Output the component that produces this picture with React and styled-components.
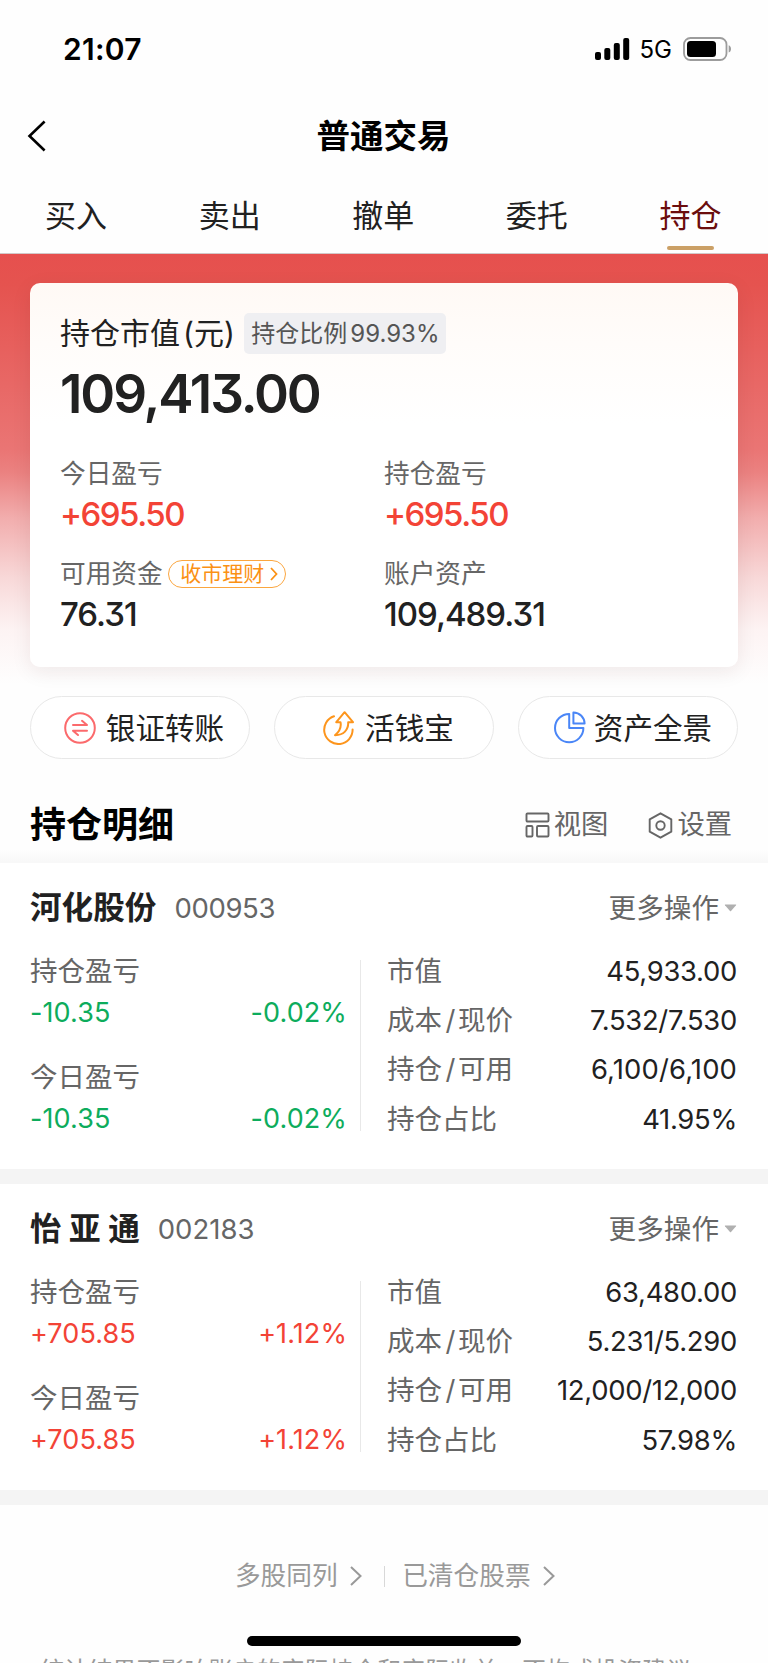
import React from 'react';
import styled, { createGlobalStyle } from 'styled-components';

const GlobalStyle = createGlobalStyle`
  * { box-sizing: border-box; }
  html, body { margin: 0; padding: 0; background: #fefefe; }
  body {
    font-family: Inter, "Noto Sans CJK SC", sans-serif;
    color: #212121;
    overflow: hidden;
  }
`;

const Screen = styled.div`
  position: relative;
  width: 768px;
  height: 1663px;
  overflow: hidden;
  background: #fefefe;
  white-space: nowrap;
`;

const StatusBar = styled.header`
  display: flex;
  justify-content: space-between;
  align-items: center;
  height: 98px;
  padding: 0 36px 0 63px;
  color: #000;
`;

const Clock = styled.span`
  font-size: 30px;
  font-weight: 600;
  line-height: 40px;
  letter-spacing: 0.3px;
`;

const StatusIcons = styled.div`
  display: flex;
  align-items: center;
`;

const Network = styled.span`
  font-size: 24px;
  line-height: 30px;
  margin: 2px 11px 0 10px;
`;

const NavBar = styled.div`
  display: grid;
  grid-template-columns: 60px 1fr 60px;
  align-items: center;
  height: 76px;
  padding: 0 1px 0 0;
`;

const BackButton = styled.button`
  border: 0;
  background: none;
  padding: 0 0 0 26px;
  display: flex;
`;

const Title = styled.h1`
  margin: 0;
  text-align: center;
  font-size: 33.5px;
  font-weight: 700;
  line-height: 44px;
  color: #000;
`;

const Tabs = styled.nav`
  display: grid;
  grid-template-columns: repeat(5, 1fr);
  height: 80px;
  border-bottom: 1px solid #d2c8c8;
`;

const Tab = styled.div`
  display: flex;
  flex-direction: column;
  align-items: center;
  padding: 20px 1.5px 0 0;
  font-size: 31px;
  line-height: 44px;
  color: ${(p) => (p.$active ? '#6b0d0d' : '#212121')};
  &::after {
    content: '';
    width: 47px;
    height: 4px;
    margin-top: 8px;
    border-radius: 2px;
    background: ${(p) => (p.$active ? '#cba066' : 'transparent')};
  }
`;

const Hero = styled.section`
  padding: 29px 30px 0;
  height: 442px;
  background: linear-gradient(
    to bottom,
    #e6504e 0,
    #e5534f 30px,
    #ea7574 195px,
    #eb8180 218px,
    #f2aeae 265px,
    #f8d9d9 325px,
    #fdf3f3 375px,
    #fefefe 430px
  );
`;

const AssetCard = styled.div`
  height: 384px;
  border-radius: 10px;
  padding: 29px 30px 0 30px;
  background: linear-gradient(to bottom, #fff9f5 0, #fffcfa 60px, #fff 140px);
  box-shadow: 0 5px 20px rgba(60, 20, 20, 0.08);
`;

const ValueHeading = styled.div`
  display: flex;
  align-items: center;
  height: 43px;
  font-size: 30px;
  line-height: 43px;
`;

const Paren = styled.span`
  margin-left: 3px;
`;

const RatioBadge = styled.span`
  display: flex;
  align-items: center;
  justify-content: center;
  gap: 3px;
  width: 202px;
  height: 41px;
  margin-left: 9.5px;
  border-radius: 5px;
  background: #efeff2;
  color: #555;
  font-size: 24px;
  line-height: 41px;
`;

const Total = styled.div`
  margin-top: 9px;
  height: 60px;
  font-size: 53px;
  font-weight: 600;
  line-height: 60px;
  letter-spacing: -2.1px;
  font-feature-settings: 'cv09';
`;

const Figures = styled.div`
  display: grid;
  grid-template-columns: 324px 1fr;
  margin-top: 30px;
  row-gap: 19px;
`;

const Figure = styled.div`
  display: flex;
  flex-direction: column;
  height: 81px;
`;

const FigureLabel = styled.div`
  display: flex;
  align-items: center;
  height: 40px;
  font-size: 25.7px;
  line-height: 40px;
  color: #666;
`;

const FigureValue = styled.div`
  height: 41px;
  font-size: 33px;
  font-weight: 500;
  line-height: 41px;
  letter-spacing: ${(p) => (p.$up ? '-1.5px' : '-1px')};
  color: ${(p) => (p.$up ? '#f34336' : '#212121')};
  font-feature-settings: 'cv09';
`;

const Chip = styled.span`
  display: flex;
  align-items: center;
  gap: 6px;
  width: 118px;
  height: 28px;
  margin-left: 5.5px;
  padding-left: 11px;
  border: 1.5px solid #fba63f;
  border-radius: 14px;
  color: #fb9114;
  font-size: 21px;
  line-height: 26px;
`;

const Shortcuts = styled.div`
  display: grid;
  grid-template-columns: repeat(3, 220px);
  gap: 24px;
  padding: 0 30px;
`;

const Shortcut = styled.button`
  display: flex;
  align-items: center;
  justify-content: center;
  gap: ${(p) => p.$gap}px;
  height: 63px;
  padding: 0 0 0 ${(p) => p.$inset}px;
  border: 1px solid #e8e8e8;
  border-radius: 32px;
  background: #fff;
  color: #212121;
  font-family: inherit;
  font-size: 29.6px;
  line-height: 40px;
`;

const SectionHead = styled.div`
  display: flex;
  align-items: center;
  height: 104px;
  padding: 28px 36px 0 30px;
  background: linear-gradient(to bottom, transparent 90px, #f8f8f8 103px);
`;

const SectionTitle = styled.h2`
  flex: 1;
  margin: 0;
  font-size: 36px;
  font-weight: 700;
  line-height: 50px;
  color: #000;
`;

const Tool = styled.span`
  display: flex;
  align-items: center;
  gap: 4px;
  margin-left: 40px;
  color: #666;
  font-size: 27.3px;
  line-height: 40px;
`;

const Holding = styled.article`
  height: 321px;
  padding: 23px 31px 0 30px;
  border-bottom: 15px solid #f4f4f4;
  background: #fff;
`;

const HoldingHead = styled.div`
  display: flex;
  align-items: center;
  height: 44px;
  margin-bottom: 19px;
`;

const StockName = styled.h3`
  margin: 0;
  font-size: 31.6px;
  font-weight: 700;
  line-height: 44px;
`;

const StockCode = styled.span`
  flex: 1;
  margin-left: 18px;
  font-size: 27.5px;
  line-height: 44px;
  letter-spacing: ${(p) => p.$spacing};
  color: #666;
`;

const More = styled.span`
  display: flex;
  align-items: center;
  gap: 5px;
  font-size: 27.6px;
  line-height: 44px;
  color: #666;
`;

const HoldingBody = styled.div`
  display: flex;
  align-items: flex-start;
`;

const ProfitColumn = styled.div`
  display: flex;
  flex-direction: column;
  gap: 24px;
  width: 331px;
  height: 171px;
  margin-top: 11px;
  padding-right: 13px;
  border-right: 1px solid #e8e8e8;
`;

const Profit = styled.div`
  margin-top: ${(p) => (p.$first ? '-9px' : '0')};
  height: 82px;
`;

const Label = styled.div`
  height: 41px;
  font-size: 27.5px;
  line-height: 41px;
  color: #666;
`;

const ProfitRow = styled.div`
  display: flex;
  justify-content: space-between;
  height: 41px;
  font-size: 27px;
  line-height: 41px;
  letter-spacing: 0.1px;
  color: ${(p) => (p.$up ? '#f34336' : '#0dac5c')};
`;

const DetailColumn = styled.div`
  flex: 1;
  padding-left: 26px;
`;

const DetailRow = styled.div`
  display: flex;
  justify-content: space-between;
  height: 49.2px;
  line-height: 45px;
  font-size: 27.5px;
  color: #666;
`;

const DetailValue = styled.span`
  font-size: 27.4px;
  letter-spacing: ${(p) => p.$spacing || '-0.28px'};
  color: #212121;
`;

const Slash = styled.span`
  margin: 0 2.5px 0 3.5px;
`;

const Footer = styled.footer`
  display: flex;
  justify-content: center;
  align-items: center;
  height: 142px;
  padding-left: 22px;
  font-size: 25.7px;
  line-height: 40px;
  color: #999;
`;

const FooterLink = styled.span`
  display: flex;
  align-items: center;
  gap: 12.5px;
`;

const FooterRule = styled.span`
  width: 1px;
  height: 21px;
  margin: 0 17px 0 22px;
  background: #d8d8d8;
`;

const Disclaimer = styled.p`
  margin: 6px 0 0 40px;
  font-size: 24.1px;
  line-height: 36px;
  color: #999;
`;

const HomeIndicator = styled.div`
  position: absolute;
  left: 247px;
  top: 1636px;
  width: 274px;
  height: 10px;
  border-radius: 5px;
  background: #000;
`;

const Signal = () => (
  <svg width="35" height="22" viewBox="0 0 35 22">
    <rect x="0" y="14" width="6" height="8" rx="2" />
    <rect x="9.3" y="10" width="6" height="12" rx="2" />
    <rect x="18.8" y="5" width="6" height="17" rx="2" />
    <rect x="28.2" y="0" width="6" height="22" rx="2" />
  </svg>
);

const Battery = () => (
  <svg width="49" height="24" viewBox="0 0 49 24">
    <rect x="1" y="1" width="42.5" height="22" rx="6.5" fill="none" stroke="#9c9c9c" strokeWidth="1.8" />
    <rect x="4" y="4" width="29" height="16" rx="3.5" fill="#000" />
    <path d="M45.7 8.2C48.8 9.4 48.8 14.4 45.7 15.6Z" fill="#9c9c9c" />
  </svg>
);

const Chevron = ({ w, h, stroke }) => (
  <svg width={w} height={h} viewBox={`0 0 ${w} ${h}`} fill="none" stroke="currentColor" strokeWidth={stroke}>
    <path d={`M1 1L${w - 1.5} ${h / 2}L1 ${h - 1}`} />
  </svg>
);

const TransferIcon = () => (
  <svg width="32" height="32" viewBox="0 0 32 32" fill="none" stroke="#fb6a6c" strokeWidth="2">
    <circle cx="16" cy="16" r="14.8" />
    <path d="M9 13H23L18 8.8M23 18.7H9L14 23" strokeLinejoin="round" strokeLinecap="round" />
  </svg>
);

const CashIcon = () => (
  <svg width="32" height="34" viewBox="0 0 32 34" fill="none" stroke="#fd951c" strokeWidth="2" strokeLinejoin="round" strokeLinecap="round">
    <path d="M11 5.3A14.2 14.2 0 1 0 29.6 18.4" />
    <path d="M21.6 1.2L13.3 11.2H17.5C18.5 16 17 20 12 24.2C20.5 24.3 25.6 19 25.2 11.2H30Z" />
  </svg>
);

const PieIcon = () => (
  <svg width="32" height="33" viewBox="0 0 32 33" fill="none" stroke="#4a86f7" strokeWidth="2" strokeLinejoin="round">
    <path d="M15.2 2.9A14.2 14.2 0 1 0 29.4 17.1H15.2Z" />
    <path d="M19.4 1.4V12.6H30.6A11.2 11.2 0 0 0 19.4 1.4Z" />
  </svg>
);

const ViewIcon = () => (
  <svg width="25" height="26" viewBox="0 0 25 26" fill="none" stroke="#666" strokeWidth="1.9">
    <rect x="1.5" y="1.5" width="22" height="8" rx="1" />
    <rect x="1.5" y="14" width="6" height="10.5" rx="1" />
    <rect x="12" y="14" width="11.5" height="10.5" rx="1" />
  </svg>
);

const SettingsIcon = () => (
  <svg width="25" height="27" viewBox="0 0 25 27" fill="none" stroke="#666" strokeWidth="1.9" strokeLinejoin="round">
    <path d="M12.5 1.3L23.3 7.3V19.7L12.5 25.7L1.7 19.7V7.3Z" />
    <circle cx="12.5" cy="13.5" r="4.2" />
  </svg>
);

const Caret = () => (
  <svg width="13" height="8" viewBox="0 0 13 8">
    <path d="M1.2 .5H11.8Q12.6.5 12 1.2L7 7Q6.5 7.5 6 7L1 1.2Q.5.5 1.2.5Z" fill="#b0b0b0" />
  </svg>
);

const tabs = ['买入', '卖出', '撤单', '委托', '持仓'];

const holdings = [
  {
    name: '河化股份', code: '000953', codeSpacing: '-0.35px', up: false, amount: '-10.35', rate: '-0.02%',
    value: '45,933.00', price: '7.532/7.530', shares: '6,100/6,100', sharesSpacing: '0.15px', share: '41.95%',
  },
  {
    name: '怡 亚 通', code: '002183', codeSpacing: '0', up: true, amount: '+705.85', rate: '+1.12%',
    value: '63,480.00', price: '5.231/5.290', shares: '12,000/12,000', share: '57.98%',
  },
];

const ProfitBlock = ({ label, item, first }) => (
  <Profit $first={first}>
    <Label>{label}</Label>
    <ProfitRow $up={item.up}>
      <span>{item.amount}</span>
      <span>{item.rate}</span>
    </ProfitRow>
  </Profit>
);

const HoldingItem = ({ item }) => (
  <Holding>
    <HoldingHead>
      <StockName>{item.name}</StockName>
      <StockCode $spacing={item.codeSpacing}>{item.code}</StockCode>
      <More>更多操作<Caret /></More>
    </HoldingHead>
    <HoldingBody>
      <ProfitColumn>
        <ProfitBlock label="持仓盈亏" item={item} first />
        <ProfitBlock label="今日盈亏" item={item} />
      </ProfitColumn>
      <DetailColumn>
        <DetailRow><span>市值</span><DetailValue>{item.value}</DetailValue></DetailRow>
        <DetailRow><span>成本<Slash>/</Slash>现价</span><DetailValue>{item.price}</DetailValue></DetailRow>
        <DetailRow>
          <span>持仓<Slash>/</Slash>可用</span>
          <DetailValue $spacing={item.sharesSpacing}>{item.shares}</DetailValue>
        </DetailRow>
        <DetailRow><span>持仓占比</span><DetailValue>{item.share}</DetailValue></DetailRow>
      </DetailColumn>
    </HoldingBody>
  </Holding>
);

export default function App() {
  return (
    <Screen>
      <GlobalStyle />
      <StatusBar>
        <Clock>21:07</Clock>
        <StatusIcons>
          <Signal />
          <Network>5G</Network>
          <Battery />
        </StatusIcons>
      </StatusBar>
      <NavBar>
        <BackButton aria-label="返回">
          <svg width="21" height="32" viewBox="0 0 21 32" fill="none" stroke="#000" strokeWidth="2.6">
            <path d="M18.6 1.5L3.5 16L18.6 30.5" />
          </svg>
        </BackButton>
        <Title>普通交易</Title>
      </NavBar>
      <Tabs>
        {tabs.map((t) => <Tab key={t} $active={t === '持仓'}>{t}</Tab>)}
      </Tabs>
      <Hero>
        <AssetCard>
          <ValueHeading>
            持仓市值<Paren>(元)</Paren>
            <RatioBadge><span>持仓比例</span><span>99.93%</span></RatioBadge>
          </ValueHeading>
          <Total>109,413.00</Total>
          <Figures>
            <Figure>
              <FigureLabel>今日盈亏</FigureLabel>
              <FigureValue $up>+695.50</FigureValue>
            </Figure>
            <Figure>
              <FigureLabel>持仓盈亏</FigureLabel>
              <FigureValue $up>+695.50</FigureValue>
            </Figure>
            <Figure>
              <FigureLabel>
                可用资金
                <Chip>收市理财<Chevron w={8} h={14} stroke={1.8} /></Chip>
              </FigureLabel>
              <FigureValue>76.31</FigureValue>
            </Figure>
            <Figure>
              <FigureLabel>账户资产</FigureLabel>
              <FigureValue>109,489.31</FigureValue>
            </Figure>
          </Figures>
        </AssetCard>
      </Hero>
      <Shortcuts>
        <Shortcut $gap={10} $inset={8}><TransferIcon />银证转账</Shortcut>
        <Shortcut $gap={10} $inset={9}><CashIcon />活钱宝</Shortcut>
        <Shortcut $gap={8} $inset={10}><PieIcon />资产全景</Shortcut>
      </Shortcuts>
      <SectionHead>
        <SectionTitle>持仓明细</SectionTitle>
        <Tool><ViewIcon />视图</Tool>
        <Tool><SettingsIcon />设置</Tool>
      </SectionHead>
      {holdings.map((h) => <HoldingItem key={h.code} item={h} />)}
      <Footer>
        <FooterLink>多股同列<Chevron w={12} h={20} stroke={2} /></FooterLink>
        <FooterRule />
        <FooterLink>已清仓股票<Chevron w={12} h={20} stroke={2} /></FooterLink>
      </Footer>
      <Disclaimer>统计结果不影响账户的实际持仓和实际收益，不构成投资建议</Disclaimer>
      <HomeIndicator />
    </Screen>
  );
}
